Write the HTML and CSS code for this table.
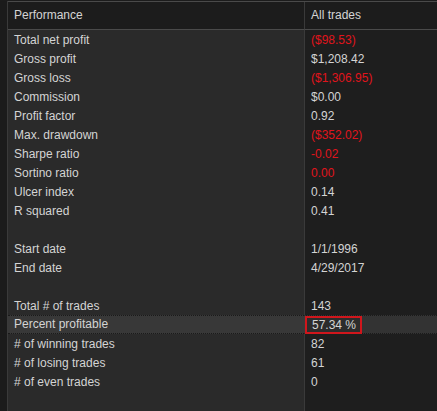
FILE: index.html
```html
<!DOCTYPE html>
<html lang="en">
<head>
    <meta charset="UTF-8" />
    <title>Performance</title>
    <link rel="stylesheet" href="styles.css">
</head>
<body>
    <div class="frame">
        <div class="gutter"></div>

        <!-- Performance summary grid -->
        <div class="grid">
            <div class="cell head">Performance</div>
            <div class="cell head value">All trades</div>

            <div class="cell">Total net profit</div><div class="cell value neg">($98.53)</div>
            <div class="cell">Gross profit</div><div class="cell value">$1,208.42</div>
            <div class="cell">Gross loss</div><div class="cell value neg">($1,306.95)</div>
            <div class="cell">Commission</div><div class="cell value">$0.00</div>
            <div class="cell">Profit factor</div><div class="cell value">0.92</div>
            <div class="cell">Max. drawdown</div><div class="cell value neg">($352.02)</div>
            <div class="cell">Sharpe ratio</div><div class="cell value neg">-0.02</div>
            <div class="cell">Sortino ratio</div><div class="cell value neg">0.00</div>
            <div class="cell">Ulcer index</div><div class="cell value">0.14</div>
            <div class="cell">R squared</div><div class="cell value">0.41</div>
            <div class="cell"></div><div class="cell value"></div>
            <div class="cell">Start date</div><div class="cell value">1/1/1996</div>
            <div class="cell">End date</div><div class="cell value">4/29/2017</div>
            <div class="cell"></div><div class="cell value"></div>
            <div class="cell">Total # of trades</div><div class="cell value">143</div>
            <div class="cell selected">Percent profitable</div><div class="cell value selected"><span class="mark">57.34 %</span></div>
            <div class="cell"># of winning trades</div><div class="cell value">82</div>
            <div class="cell"># of losing trades</div><div class="cell value">61</div>
            <div class="cell"># of even trades</div><div class="cell value">0</div>
            <div class="cell"></div><div class="cell value"></div>
        </div>
    </div>
</body>
</html>
```

FILE: styles.css
```css
/* Dark grid look */
html, body {
    margin: 0;
    padding: 0;
    height: 100%;
    background-color: #1c1c1c;
}

body {
    font-family: 'Liberation Sans', Arial, sans-serif;
    font-size: 12px;
    color: #d4d4d4;
    overflow: hidden;
}

.frame {
    display: flex;
    height: 100%;
    padding-top: 1px;
    box-sizing: border-box;
}

.gutter {
    width: 7px;
    background-color: #1b1b1b;
    border-right: 1px solid #3a3a3a;
    flex-shrink: 0;
}

.grid {
    flex: 1;
    display: grid;
    grid-template-columns: 296px 1fr;
    grid-template-rows: 28px repeat(19, 19px) 1fr;
    border-top: 1px solid #4a4a4a;
    background-color: #2a2a2a;
}

.cell {
    padding: 1px 0 0 6px;
    line-height: 18px;
    white-space: nowrap;
    background-color: #2a2a2a;
}

.cell.value {
    background-color: #1e1e1e;
    border-left: 1px solid #3a3a3a;
}

.cell.head {
    background-color: #1c1c1c;
    padding-top: 0;
    line-height: 27px;
    border-bottom: 1px solid #4a4a4a;
}

.neg {
    color: #e0141c;
}

/* Highlighted row */
.cell.selected {
    background-color: #383838;
    border-top: 1px dotted #1a1a1a;
    border-bottom: 1px dotted #1a1a1a;
    padding-top: 0;
    line-height: 17px;
}

.cell.value.selected {
    background-color: #333333;
    padding-left: 0;
}

.mark {
    display: inline-block;
    border: 2px solid #d0161c;
    padding: 0 4px 0 5px;
    line-height: 14px;
    background-color: #2c2c2c;
}
```
